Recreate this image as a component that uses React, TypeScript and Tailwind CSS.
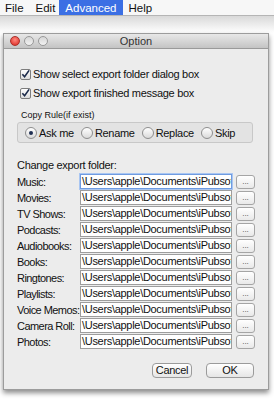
import { useState } from "react";

const folders = [
  "Music:",
  "Movies:",
  "TV Shows:",
  "Podcasts:",
  "Audiobooks:",
  "Books:",
  "Ringtones:",
  "Playlists:",
  "Voice Memos:",
  "Camera Roll:",
  "Photos:",
];

const rules = ["Ask me", "Rename", "Replace", "Skip"];

function Check({ label }: { label: string }) {
  return (
    <label className="flex items-center gap-[2px] h-[14px]">
      <span className="w-[11px] h-[11px] rounded-[2px] border border-[#7d7d7d] bg-gradient-to-b from-white to-[#dcdcdc] flex items-center justify-center">
        <svg width="10" height="10" viewBox="0 0 10 10">
          <path d="M1.5 5.2 L4 8 L9 1" stroke="#1b2a4a" strokeWidth="1.8" fill="none" />
        </svg>
      </span>
      <span>{label}</span>
    </label>
  );
}

export default function App() {
  const [rule, setRule] = useState("Ask me");

  return (
    <div className="w-[274px] h-[400px] bg-white overflow-hidden text-[11px] leading-[14px] tracking-[-0.3px] text-[#111] font-['Liberation_Sans',Arial,sans-serif]">
      <div className="h-[15px] flex items-center bg-[#f7f7f7] text-[11.5px] tracking-normal">
        <span className="ml-[5px]">File</span>
        <span className="ml-[12px]">Edit</span>
        <span className="ml-[4px] px-[6px] h-full flex items-center bg-[#3b6fe4] text-white">Advanced</span>
        <span className="ml-[6px]">Help</span>
      </div>
      <div className="h-[18px] border-t border-[#b5b5b5] bg-gradient-to-b from-[#d9d9d9] to-white" />

      <div className="mx-[3px] w-[266px] h-[357px] border border-[#9c9c9c] bg-[#ececec] shadow-[0_3px_5px_rgba(0,0,0,0.45)]">
        <div className="h-[15px] relative flex items-center justify-center bg-gradient-to-b from-[#e8e8e8] to-[#c4c4c4] border-b border-[#9a9a9a]">
          <div className="absolute left-[6px] top-[2px] flex gap-[4px]">
            <span className="w-[10px] h-[10px] rounded-full bg-[radial-gradient(circle_at_50%_35%,#ff8a80,#d9231d)] border border-[#a8302a]" />
            <span className="w-[10px] h-[10px] rounded-full bg-gradient-to-b from-[#d6d6d6] to-[#f2f2f2] border border-[#999]" />
            <span className="w-[10px] h-[10px] rounded-full bg-gradient-to-b from-[#d6d6d6] to-[#f2f2f2] border border-[#999]" />
          </div>
          <span className="text-[11px] text-[#333] tracking-normal">Option</span>
        </div>

        <div className="pl-[13px] pr-[13px] pt-[18px]">
          <div className="flex flex-col gap-[5px] pl-[3px]">
            <Check label="Show select export folder dialog box" />
            <Check label="Show export finished message box" />
          </div>

          <div className="mt-[9px] pl-[4px] text-[9px] leading-[12px] tracking-normal">Copy Rule(if exist)</div>
          <div className="mt-[1px] h-[21px] w-[236px] border border-[#c8c8c8] rounded-[3px] bg-[#e3e3e3] flex items-center gap-[7px] px-[7px] whitespace-nowrap">
            {rules.map((r) => (
              <label key={r} className="flex items-center gap-[2px]" onClick={() => setRule(r)}>
                <span className="w-[12px] h-[12px] rounded-full border border-[#8e8e8e] bg-gradient-to-b from-white to-[#dadada] flex items-center justify-center">
                  {rule === r && <span className="w-[4px] h-[4px] rounded-full bg-[#1f2f52]" />}
                </span>
                <span>{r}</span>
              </label>
            ))}
          </div>

          <div className="mt-[15px]">Change export folder:</div>
          <div className="mt-[2px] flex flex-col gap-[1px]">
            {folders.map((f, i) => (
              <div key={f} className="flex items-center h-[15px]">
                <span className="w-[63px] shrink-0 whitespace-nowrap tracking-[-0.55px]">{f}</span>
                <div
                  className={
                    "w-[152px] h-[15px] bg-white overflow-hidden whitespace-nowrap pl-[1px] leading-[13px] " +
                    (i === 0
                      ? "border border-[#6f9be0] shadow-[0_0_0_1px_#a9c6f2]"
                      : "border border-[#9d9d9d]")
                  }
                >
                  \Users\apple\Documents\iPubsoft
                </div>
                <button className="ml-[4px] w-[19px] h-[14px] rounded-[3px] border border-[#a5a5a5] bg-gradient-to-b from-white to-[#e9e9e9] text-[8px] leading-[8px] text-[#444] tracking-normal flex items-end justify-center pb-[2px]">
                  ...
                </button>
              </div>
            ))}
          </div>

          <div className="mt-[14px] flex justify-end gap-[14px] pr-[1px]">
            <button className="w-[40px] h-[15px] rounded-[4px] border border-[#9b9b9b] bg-gradient-to-b from-white to-[#e6e6e6] text-[11px] leading-[13px]">
              Cancel
            </button>
            <button className="w-[48px] h-[15px] rounded-[4px] border border-[#9b9b9b] bg-gradient-to-b from-white to-[#e6e6e6] text-[11px] leading-[13px]">
              OK
            </button>
          </div>
        </div>
      </div>
    </div>
  );
}
